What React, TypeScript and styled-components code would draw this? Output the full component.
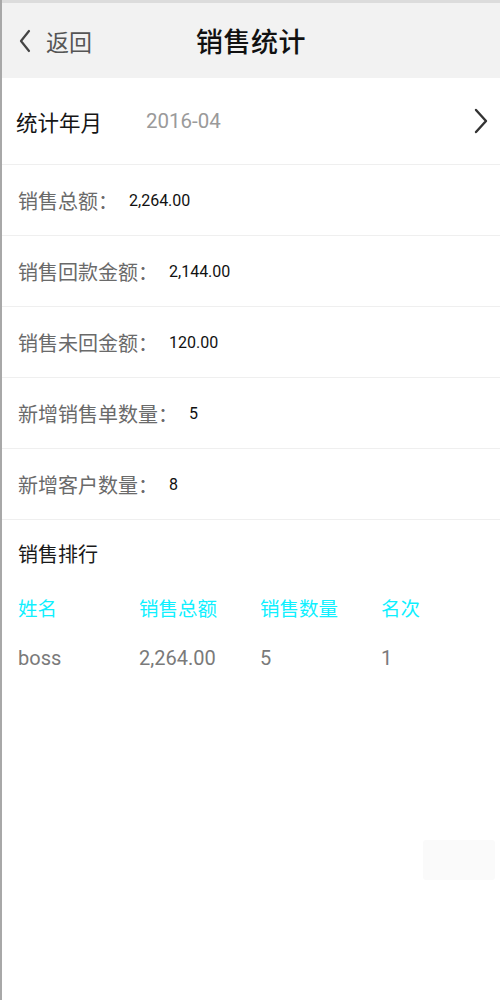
import React from "react";
import styled, { createGlobalStyle } from "styled-components";

const GlobalStyle = createGlobalStyle`
  html, body {
    margin: 0;
    padding: 0;
    background: #ffffff;
  }
  body {
    font-family: Roboto, "Noto Sans CJK SC", sans-serif;
  }
  * {
    box-sizing: border-box;
  }
`;

const Page = styled.div`
  position: relative;
  width: 500px;
  min-height: 1000px;
  background: #ffffff;
  border-left: 2px solid #a8a8a8;
`;

const Header = styled.header`
  position: relative;
  height: 78px;
  background: #f2f2f2;
  border-top: 3px solid #dcdcdc;
  display: flex;
  align-items: center;
  justify-content: center;
`;

const BackButton = styled.div`
  position: absolute;
  left: 16px;
  top: 0;
  bottom: 0;
  display: flex;
  align-items: center;
  gap: 14px;
  color: #555;
  font-size: 23px;
`;

const Title = styled.h1`
  margin: 0;
  font-size: 27px;
  font-weight: 500;
  color: #111;
  letter-spacing: 0.5px;
`;

const MonthRow = styled.div`
  height: 87px;
  display: flex;
  align-items: center;
  padding: 0 12px 0 14px;
  border-bottom: 1px solid #efefef;
`;

const MonthLabel = styled.span`
  font-size: 21.5px;
  color: #151515;
  width: 130px;
`;

const MonthValue = styled.span`
  flex: 1;
  font-size: 20.5px;
  color: #9a9a9a;
`;

const StatRow = styled.div`
  height: 71px;
  display: flex;
  align-items: center;
  padding: 0 16px;
  border-bottom: 1px solid #efefef;
`;

const StatLabel = styled.span`
  font-size: 20px;
  color: #6a6a6a;
  margin-right: 11px;
`;

const StatValue = styled.span`
  font-size: 16px;
  color: #111;
`;

const Section = styled.section`
  padding: 22px 16px 0;
`;

const SectionTitle = styled.div`
  font-size: 20px;
  color: #1a1a1a;
  height: 26px;
  line-height: 26px;
`;

const Table = styled.div`
  margin-top: 25px;
  display: flex;
  flex-direction: column;
  gap: 26px;
`;

const TableRow = styled.div`
  display: grid;
  grid-template-columns: 121px 121px 121px 1fr;
  height: 26px;
  align-items: center;
`;

const Cell = styled.span<{ $head?: boolean }>`
  font-size: ${(p) => (p.$head ? "19.5px" : "20px")};
  color: ${(p) => (p.$head ? "#0ff0ff" : "#7a7a7a")};
  white-space: nowrap;
`;

const FloatBox = styled.div`
  position: absolute;
  right: 5px;
  top: 840px;
  width: 72px;
  height: 40px;
  background: #fafafa;
  border-radius: 3px;
`;

const stats = [
  { label: "销售总额：", value: "2,264.00" },
  { label: "销售回款金额：", value: "2,144.00" },
  { label: "销售未回金额：", value: "120.00" },
  { label: "新增销售单数量：", value: "5" },
  { label: "新增客户数量：", value: "8" },
];

const rankHead = ["姓名", "销售总额", "销售数量", "名次"];
const rankRows = [["boss", "2,264.00", "5", "1"]];

const App = () => {
  return (
    <>
      <GlobalStyle />
      <Page>
        <Header>
          <BackButton>
            <svg width="14" height="24" viewBox="0 0 14 24">
              <path
                d="M11 2 L3 12 L11 22"
                fill="none"
                stroke="#444"
                strokeWidth="2.2"
                strokeLinecap="round"
                strokeLinejoin="round"
              />
            </svg>
            <span>返回</span>
          </BackButton>
          <Title>销售统计</Title>
        </Header>

        <MonthRow>
          <MonthLabel>统计年月</MonthLabel>
          <MonthValue>2016-04</MonthValue>
          <svg width="14" height="26" viewBox="0 0 14 26">
            <path
              d="M2 2 L12 13 L2 24"
              fill="none"
              stroke="#333"
              strokeWidth="2.4"
              strokeLinecap="round"
              strokeLinejoin="round"
            />
          </svg>
        </MonthRow>

        {stats.map((s) => (
          <StatRow key={s.label}>
            <StatLabel>{s.label}</StatLabel>
            <StatValue>{s.value}</StatValue>
          </StatRow>
        ))}

        <Section>
          <SectionTitle>销售排行</SectionTitle>
          <Table>
            <TableRow>
              {rankHead.map((h) => (
                <Cell $head key={h}>
                  {h}
                </Cell>
              ))}
            </TableRow>
            {rankRows.map((r, i) => (
              <TableRow key={i}>
                {r.map((c, j) => (
                  <Cell key={j}>{c}</Cell>
                ))}
              </TableRow>
            ))}
          </Table>
        </Section>

        <FloatBox />
      </Page>
    </>
  );
};

export default App;
